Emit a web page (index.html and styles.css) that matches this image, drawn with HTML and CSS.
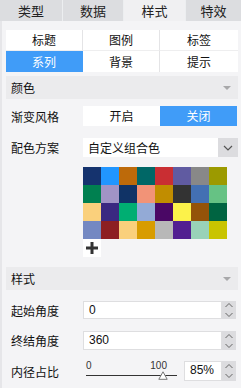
FILE: index.html
```html
<!DOCTYPE html>
<html lang="zh">
<head>
<meta charset="utf-8">
<link rel="stylesheet" href="styles.css">
</head>
<body>
<div class="panel">
  <div class="tabs">
    <div class="tab t1">类型</div>
    <div class="tab t2">数据</div>
    <div class="tab t3 active">样式</div>
    <div class="tab t4">特效</div>
  </div>
  <div class="body">
    <div class="subtabs">
      <div class="st">标题</div>
      <div class="st">图例</div>
      <div class="st">标签</div>
      <div class="st sel">系列</div>
      <div class="st">背景</div>
      <div class="st">提示</div>
    </div>

    <div class="header hdr1"><span>颜色</span><i class="caret"></i></div>

    <div class="row r-grad">
      <div class="label">渐变风格</div>
      <div class="toggle">
        <div class="opt">开启</div>
        <div class="opt on">关闭</div>
      </div>
    </div>

    <div class="row r-scheme">
      <div class="label">配色方案</div>
      <div class="select">
        <div class="sel-text">自定义组合色</div>
        <div class="sel-btn"><svg width="10" height="6" viewBox="0 0 10 6"><path d="M1 1 L5 5 L9 1" fill="none" stroke="#555" stroke-width="1.2"/></svg></div>
      </div>
    </div>

    <div class="palette">
      <div class="sw" style="background:#15336e"></div>
      <div class="sw" style="background:#2196ff"></div>
      <div class="sw" style="background:#bd6a0a"></div>
      <div class="sw" style="background:#006766"></div>
      <div class="sw" style="background:#c92e33"></div>
      <div class="sw" style="background:#605ba1"></div>
      <div class="sw" style="background:#888888"></div>
      <div class="sw" style="background:#9c9a00"></div>
      <div class="sw" style="background:#008050"></div>
      <div class="sw" style="background:#a194c6"></div>
      <div class="sw" style="background:#103366"></div>
      <div class="sw" style="background:#f29377"></div>
      <div class="sw" style="background:#c18d00"></div>
      <div class="sw" style="background:#333333"></div>
      <div class="sw" style="background:#4370b3"></div>
      <div class="sw" style="background:#66c284"></div>
      <div class="sw" style="background:#fad07c"></div>
      <div class="sw" style="background:#3a2881"></div>
      <div class="sw" style="background:#00ae72"></div>
      <div class="sw" style="background:#93aad6"></div>
      <div class="sw" style="background:#4a0765"></div>
      <div class="sw" style="background:#fcf24a"></div>
      <div class="sw" style="background:#945309"></div>
      <div class="sw" style="background:#006441"></div>
      <div class="sw" style="background:#7488c2"></div>
      <div class="sw" style="background:#8d1f22"></div>
      <div class="sw" style="background:#fad07c"></div>
      <div class="sw" style="background:#d89c00"></div>
      <div class="sw" style="background:#b8b8b8"></div>
      <div class="sw" style="background:#521f91"></div>
      <div class="sw" style="background:#99d2b8"></div>
      <div class="sw" style="background:#c9c400"></div>
      <div class="add"><svg width="16" height="16" viewBox="0 0 16 16"><path d="M8 2 V14 M2 8 H14" stroke="#333" stroke-width="3"/></svg></div>
    </div>

    <div class="header hdr2"><span>样式</span><i class="caret"></i></div>

    <div class="row r-start">
      <div class="label">起始角度</div>
      <div class="num">
        <div class="num-in">0</div>
        <div class="spin"><svg width="10" height="18" viewBox="0 0 10 18"><path d="M1.5 6 L5 2.5 L8.5 6 M1.5 12 L5 15.5 L8.5 12" fill="none" stroke="#666" stroke-width="1"/></svg></div>
      </div>
    </div>

    <div class="row r-end">
      <div class="label">终结角度</div>
      <div class="num">
        <div class="num-in">360</div>
        <div class="spin"><svg width="10" height="18" viewBox="0 0 10 18"><path d="M1.5 6 L5 2.5 L8.5 6 M1.5 12 L5 15.5 L8.5 12" fill="none" stroke="#666" stroke-width="1"/></svg></div>
      </div>
    </div>

    <div class="row r-ratio">
      <div class="label">内径占比</div>
      <div class="slider">
        <div class="ticks"><span>0</span><span>100</span></div>
        <div class="track"></div>
        <svg class="thumb" width="10" height="9" viewBox="0 0 10 9"><path d="M5 0.8 L9.2 8.3 L0.8 8.3 Z" fill="#fff" stroke="#777" stroke-width="1"/></svg>
      </div>
      <div class="num small">
        <div class="num-in">85%</div>
        <div class="spin"><svg width="10" height="18" viewBox="0 0 10 18"><path d="M1.5 6 L5 2.5 L8.5 6 M1.5 12 L5 15.5 L8.5 12" fill="none" stroke="#666" stroke-width="1"/></svg></div>
      </div>
    </div>
  </div>
</div>
</body>
</html>
```

FILE: styles.css
```css
* { box-sizing: border-box; }
html, body { margin: 0; padding: 0; }
body {
  width: 241px;
  height: 388px;
  overflow: hidden;
  background: #f4f4f6;
  font-family: "Noto Sans CJK SC", "Liberation Sans", sans-serif;
  font-size: 12px;
  color: #111;
}
.panel { width: 241px; height: 388px; }
.tabs {
  display: flex;
  height: 21px;
  background: #dcdde0;
}
.tab {
  height: 21px;
  line-height: 21px;
  text-align: center;
  font-size: 13px;
  color: #222;
  border-right: 1px solid #eceef0;
}
.t1 { width: 63px; }
.t2 { width: 61px; }
.t3 { width: 62px; }
.t4 { flex: 1; border-right: none; }
.tab.active { background: #f0f0f2; }

.body {
  border-left: 2px solid #e6e6e9;
  padding: 9px 3px 0 4px;
  height: 367px;
}
.subtabs {
  display: grid;
  grid-template-columns: 77px 77px 78px;
  grid-template-rows: 21px 21px;
  background: #fff;
}
.st {
  text-align: center;
  line-height: 21px;
  font-size: 12px;
  color: #111;
  border-right: 1px solid #e4e4e6;
}
.st:nth-child(3n) { border-right: none; }
.st:nth-child(-n+3) { border-bottom: 1px solid #eeeeef; line-height: 20px; }
.st.sel { background: #409cf8; color: #fff; border-right-color: #409cf8; }

.header {
  display: flex;
  align-items: center;
  justify-content: space-between;
  height: 23px;
  background: #ebebed;
  padding: 0 7px 0 5px;
  font-size: 12px;
}
.hdr1 { margin-top: 4px; }
.hdr2 { margin-top: 10px; }
.caret {
  display: block;
  width: 0; height: 0;
  border-left: 4px solid transparent;
  border-right: 4px solid transparent;
  border-top: 4px solid #a8a8aa;
}

.row { display: flex; align-items: center; }
.label { width: 77px; padding-left: 5px; font-size: 12px; color: #111; flex: none; }
.r-grad { margin-top: 7px; height: 20px; }
.r-scheme { margin-top: 12px; height: 19px; }
.r-start { margin-top: 11px; height: 18px; }
.r-end { margin-top: 12px; height: 19px; }
.r-ratio { margin-top: 11px; height: 20px; }

.toggle {
  display: flex;
  width: 154px;
  height: 20px;
  background: #fff;
}
.opt { flex: 1; text-align: center; line-height: 20px; color: #111; }
.opt.on { background: #409cf8; color: #fff; }

.select {
  display: flex;
  width: 155px;
  height: 19px;
  background: #fff;
}
.sel-text { flex: 1; line-height: 19px; padding-left: 5px; color: #111; }
.sel-btn {
  width: 20px;
  background: #dcdcdf;
  display: flex;
  align-items: center;
  justify-content: center;
}

.palette {
  margin: 10px 0 0 77px;
  display: grid;
  grid-template-columns: repeat(8, 18px);
  grid-auto-rows: 18px;
}
.add {
  background: #fff;
  display: flex;
  align-items: center;
  justify-content: center;
}

.num {
  display: flex;
  width: 153px;
  height: 100%;
}
.num-in {
  flex: 1;
  background: #fff;
  border: 1px solid #dedee0;
  padding-left: 5px;
  line-height: 16px;
  font-family: "Liberation Sans", sans-serif;
  font-size: 12px;
  color: #111;
}
.spin {
  width: 14px;
  background: #dcdcdf;
  display: flex;
  align-items: center;
  justify-content: center;
}
.num.small { width: 52px; margin-left: 7px; }

.slider {
  position: relative;
  width: 94px;
  height: 20px;
  flex: none;
}
.ticks {
  display: flex;
  justify-content: space-between;
  width: 81px;
  margin-left: 3px;
  font-family: "Liberation Sans", sans-serif;
  font-size: 10px;
  line-height: 10px;
  color: #333;
}
.track {
  margin: 4px 0 0 3px;
  width: 91px;
  height: 1px;
  background: #333;
}
.thumb { position: absolute; left: 75px; top: 10px; }
```
